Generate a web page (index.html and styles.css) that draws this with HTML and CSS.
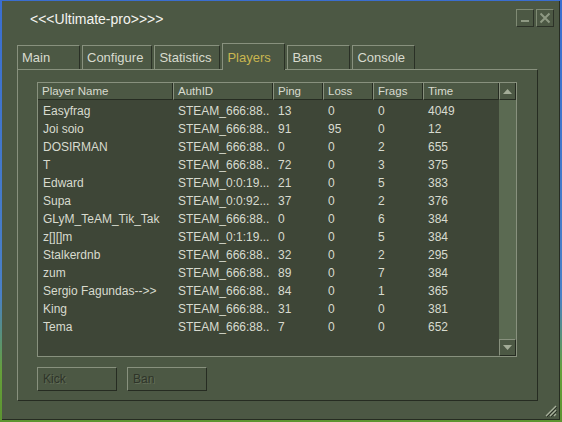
FILE: index.html
```html
<!DOCTYPE html>
<html lang="en">
<head>
  <meta charset="UTF-8" />
  <title>&lt;&lt;&lt;Ultimate-pro&gt;&gt;&gt;&gt;</title>
  <link rel="stylesheet" href="styles.css">
</head>
<body>
  <div class="window">
    <div class="titlebar">
      <span class="title">&lt;&lt;&lt;Ultimate-pro&gt;&gt;&gt;&gt;</span>
      <div class="title-buttons">
        <div class="title-btn">
          <svg width="16" height="16" viewBox="0 0 16 16"><rect x="4" y="10" width="8" height="2" fill="#8e9983"/></svg>
        </div>
        <div class="title-btn">
          <svg width="16" height="16" viewBox="0 0 16 16"><path d="M3.5 3.5 L12.5 12.5 M12.5 3.5 L3.5 12.5" stroke="#8e9983" stroke-width="2"/></svg>
        </div>
      </div>
    </div>

    <div class="content">
      <div class="tabs">
        <div class="tab">Main</div>
        <div class="tab">Configure</div>
        <div class="tab">Statistics</div>
        <div class="tab active">Players</div>
        <div class="tab">Bans</div>
        <div class="tab">Console</div>
      </div>

      <div class="panel">
        <div class="list">
          <div class="list-main">
            <div class="list-head">
              <div class="col">Player Name</div>
              <div class="col">AuthID</div>
              <div class="col">Ping</div>
              <div class="col">Loss</div>
              <div class="col">Frags</div>
              <div class="col">Time</div>
            </div>
            <div class="list-body" id="players"></div>
          </div>
          <div class="scrollbar">
            <div class="scroll-btn up">
              <svg width="9" height="5" viewBox="0 0 9 5"><path d="M4.5 0 L9 5 L0 5 Z" fill="#a3ac97"/></svg>
            </div>
            <div class="scroll-track"></div>
            <div class="scroll-btn down">
              <svg width="9" height="5" viewBox="0 0 9 5"><path d="M0 0 L9 0 L4.5 5 Z" fill="#a3ac97"/></svg>
            </div>
          </div>
        </div>

        <div class="actions">
          <button class="btn" disabled>Kick</button>
          <button class="btn" disabled>Ban</button>
        </div>
      </div>
    </div>

    <svg class="grip" width="12" height="12" viewBox="0 0 12 12">
      <path d="M11 1 L1 11 M11 5 L5 11 M11 9 L9 11" stroke="#a8b19c" stroke-width="1.2"/>
      <path d="M12 2 L2 12 M12 6 L6 12" stroke="#2a3026" stroke-width="1"/>
    </svg>
  </div>

  <script>
    const players = [
      ["Easyfrag", "STEAM_666:88..", 13, 0, 0, 4049],
      ["Joi soio", "STEAM_666:88..", 91, 95, 0, 12],
      ["DOSIRMAN", "STEAM_666:88..", 0, 0, 2, 655],
      ["T", "STEAM_666:88..", 72, 0, 3, 375],
      ["Edward", "STEAM_0:0:19...", 21, 0, 5, 383],
      ["Supa", "STEAM_0:0:92...", 37, 0, 2, 376],
      ["GLyM_TeAM_Tik_Tak", "STEAM_666:88..", 0, 0, 6, 384],
      ["z[][]m", "STEAM_0:1:19...", 0, 0, 5, 384],
      ["Stalkerdnb", "STEAM_666:88..", 32, 0, 2, 295],
      ["zum", "STEAM_666:88..", 89, 0, 7, 384],
      ["Sergio Fagundas-->>", "STEAM_666:88..", 84, 0, 1, 365],
      ["King", "STEAM_666:88..", 31, 0, 0, 381],
      ["Tema", "STEAM_666:88..", 7, 0, 0, 652]
    ];

    const body = document.getElementById("players");
    players.forEach(row => {
      row.forEach(value => {
        const cell = document.createElement("div");
        cell.className = "cell";
        cell.textContent = value;
        body.appendChild(cell);
      });
    });
  </script>
</body>
</html>
```

FILE: styles.css
```css
html, body {
  margin: 0;
  padding: 0;
  width: 562px;
  height: 422px;
  overflow: hidden;
  background: linear-gradient(to bottom, #3a6ed0 0%, #4a80c6 70%, #66a03a 88%, #5c9430 100%);
  font-family: 'Liberation Sans', Arial, sans-serif;
  color: #d8dbcf;
}

.window {
  position: relative;
  box-sizing: border-box;
  margin: 1px 0 0 2px;
  width: 558px;
  height: 419px;
  background: #4c5844;
  border-right: 1px solid #262c22;
  border-bottom: 1px solid #262c22;
}

/* title bar */

.titlebar {
  box-sizing: border-box;
  height: 42px;
  display: flex;
  justify-content: space-between;
  align-items: flex-start;
  padding: 8px 5px 0 28px;
}

.title {
  margin-top: 3px;
  font-size: 14px;
  line-height: 15px;
  color: #f4f4f0;
}

.title-buttons {
  display: flex;
  gap: 2px;
}

.title-btn {
  box-sizing: border-box;
  width: 18px;
  height: 18px;
  border: 1px solid #7f8a74;
  border-right-color: #2c3228;
  border-bottom-color: #2c3228;
  display: flex;
}

/* tabs */

.content {
  padding: 0 21px 0 15px;
}

.tabs {
  display: flex;
  align-items: flex-end;
  gap: 2px;
  height: 26px;
}

.tab {
  box-sizing: border-box;
  min-width: 63px;
  height: 24px;
  padding: 4px 8px 0 4px;
  font-size: 13px;
  line-height: 15px;
  border-top: 1px solid #88917e;
  border-left: 1px solid #88917e;
  border-right: 1px solid #2a3026;
}

.tab.active {
  position: relative;
  z-index: 1;
  height: 27px;
  margin-bottom: -1px;
  padding-top: 6px;
  background: #4c5844;
  color: #c8b650;
}

.panel {
  box-sizing: border-box;
  height: 332px;
  padding: 12px 20px 9px 19px;
  border: 1px solid #88917e;
  border-right-color: #262c22;
  border-bottom-color: #262c22;
}

/* player list */

.list {
  box-sizing: border-box;
  height: 275px;
  display: flex;
  border: 1px solid #88917e;
  background: #3e4637;
}

.list-main {
  flex: 1;
}

.list-head,
.list-body {
  display: grid;
  grid-template-columns: 135px 100px 50px 50px 50px 76px;
}

.list-head {
  background: #4c5844;
}

.col {
  box-sizing: border-box;
  height: 17px;
  padding-left: 4px;
  font-size: 11.5px;
  line-height: 16px;
  border-left: 1px solid #88917e;
  border-right: 1px solid #262c22;
  border-bottom: 1px solid #262c22;
  white-space: nowrap;
}

.col:first-child {
  border-left: none;
}

.list-body {
  padding-top: 2px;
}

.cell {
  height: 18px;
  padding-left: 5px;
  font-size: 12px;
  line-height: 18px;
  white-space: nowrap;
  overflow: hidden;
}

.scrollbar {
  width: 17px;
  display: flex;
  flex-direction: column;
}

.scroll-btn {
  box-sizing: border-box;
  height: 17px;
  display: flex;
  align-items: center;
  justify-content: center;
  background: #4c5844;
  border: 1px solid #88917e;
  border-right-color: #262c22;
  border-bottom-color: #262c22;
}

.scroll-btn.up {
  border-top: none;
}

.scroll-track {
  flex: 1;
  background: #5b6a52;
}

/* buttons */

.actions {
  display: flex;
  gap: 10px;
  margin-top: 10px;
}

.btn {
  box-sizing: border-box;
  width: 80px;
  height: 24px;
  padding: 3px 5px 0;
  text-align: left;
  font-family: 'Liberation Sans', Arial, sans-serif;
  font-size: 12px;
  line-height: 16px;
  color: #2e3429;
  text-shadow: 1px 1px 0 #626d57;
  background: #4c5844;
  border: 1px solid #88917e;
  border-right-color: #262c22;
  border-bottom-color: #262c22;
  display: flex;
  align-items: flex-start;
}

.grip {
  position: absolute;
  right: 2px;
  bottom: 2px;
}
```
